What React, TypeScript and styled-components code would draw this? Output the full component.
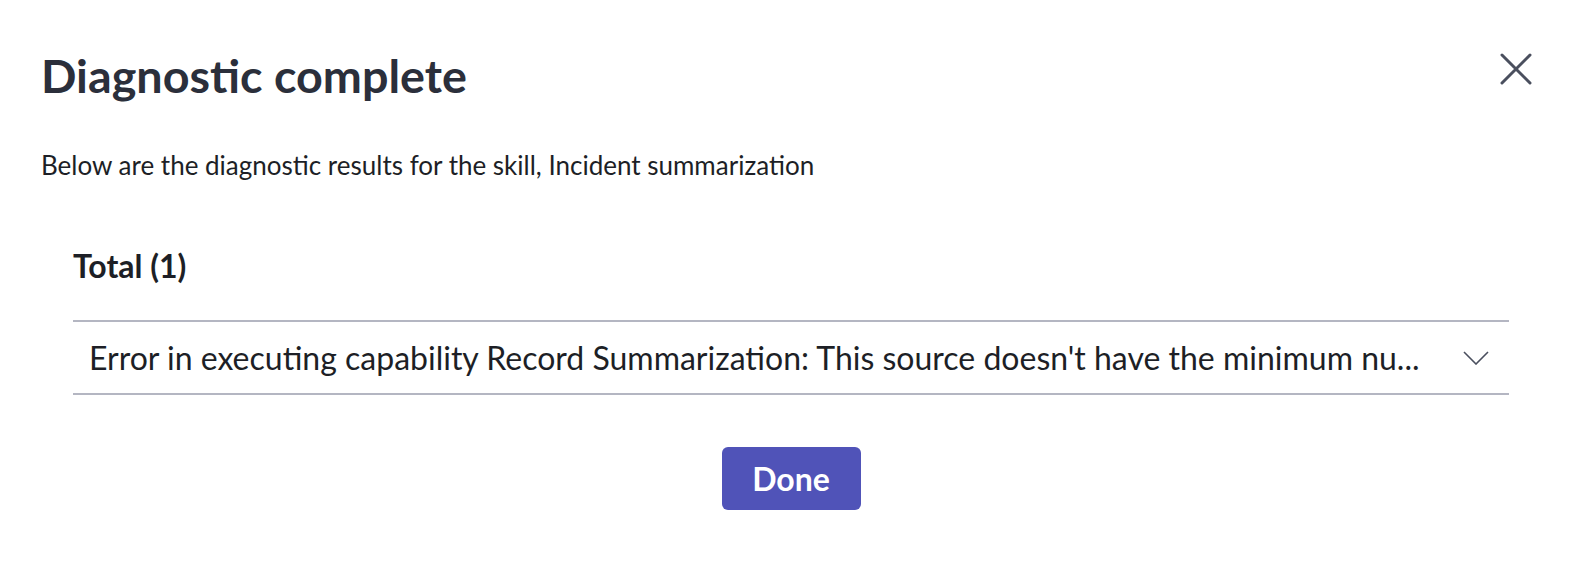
import styled, { createGlobalStyle } from 'styled-components';

const GlobalStyle = createGlobalStyle`
  html, body {
    margin: 0;
    padding: 0;
    background: #fff;
    overflow: hidden;
  }
  body {
    font-family: Lato, "Noto Sans", sans-serif;
    color: #1d1f26;
  }
`;

const Dialog = styled.div`
  width: 100%;
  height: 100vh;
  box-sizing: border-box;
  padding: 44px 41px 0 41px;
  display: flex;
  flex-direction: column;
`;

const Header = styled.div`
  display: flex;
  justify-content: space-between;
  align-items: flex-start;
`;

const Title = styled.h1`
  margin: 0;
  font-size: 46.7px;
  line-height: 62px;
  font-weight: 700;
  color: #2b2f3b;
`;

const CloseButton = styled.button`
  border: none;
  background: transparent;
  padding: 0;
  margin: 8px 8px 0 0;
  width: 34px;
  height: 34px;
  cursor: pointer;
  display: flex;
  align-items: center;
  justify-content: center;
`;

const Intro = styled.p`
  margin: 44px 0 0 0;
  font-size: 26px;
  line-height: 30px;
`;

const Results = styled.section`
  margin: 68px 32px 0 32px;
`;

const TotalLabel = styled.h2`
  margin: 0;
  font-size: 32px;
  line-height: 36px;
  font-weight: 700;
`;

const ItemList = styled.div`
  margin-top: 36px;
  border-top: 2px solid #b4b6c2;
`;

const Item = styled.div`
  display: flex;
  align-items: center;
  justify-content: space-between;
  height: 71px;
  padding: 0 20px 0 16px;
  border-bottom: 2px solid #b4b6c2;
`;

const ItemText = styled.span`
  font-size: 32px;
  white-space: nowrap;
`;

const Footer = styled.div`
  display: flex;
  justify-content: center;
  margin-top: 52px;
`;

const DoneButton = styled.button`
  width: 139px;
  height: 63px;
  border: none;
  border-radius: 6px;
  background: #5053b8;
  color: #fff;
  font-family: Lato, "Noto Sans", sans-serif;
  font-weight: 700;
  font-size: 32px;
  cursor: pointer;
`;

export default function App() {
  return (
    <>
      <GlobalStyle />
      <Dialog>
        <Header>
          <Title>Diagnostic complete</Title>
          <CloseButton aria-label="Close">
            <svg width="32" height="32" viewBox="0 0 32 32" fill="none">
              <path d="M2 2 L30 30 M30 2 L2 30" stroke="#4a4f5e" strokeWidth="3" strokeLinecap="round" />
            </svg>
          </CloseButton>
        </Header>
        <Intro>Below are the diagnostic results for the skill, Incident summarization</Intro>
        <Results>
          <TotalLabel>Total (1)</TotalLabel>
          <ItemList>
            <Item>
              <ItemText>
                Error in executing capability Record Summarization: This source doesn't have the minimum nu...
              </ItemText>
              <svg width="26" height="14" viewBox="0 0 26 14" fill="none">
                <path d="M1 1 L13 13 L25 1" stroke="#4a4f5e" strokeWidth="1.6" />
              </svg>
            </Item>
          </ItemList>
        </Results>
        <Footer>
          <DoneButton>Done</DoneButton>
        </Footer>
      </Dialog>
    </>
  );
}
